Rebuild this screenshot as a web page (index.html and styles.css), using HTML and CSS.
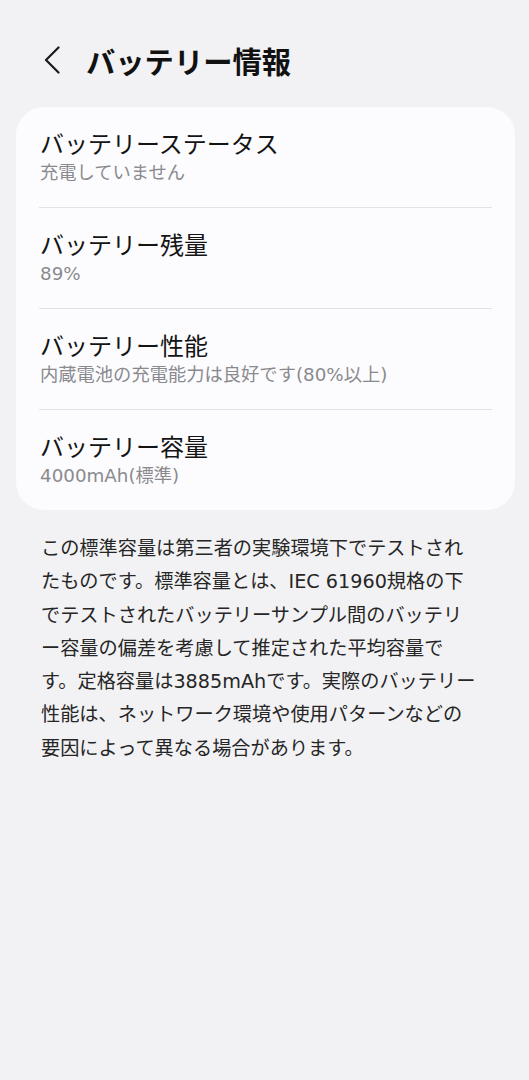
FILE: index.html
```html
<!DOCTYPE html>
<html lang="ja">
<head>
<meta charset="utf-8">
<title>バッテリー情報</title>
<link rel="stylesheet" href="styles.css">
</head>
<body>
<header class="header">
  <svg class="back" width="16" height="28" viewBox="0 0 16 28" aria-hidden="true">
    <polyline points="14.5,1.5 2,14 14.5,26.5" fill="none" stroke="#1a1a1a" stroke-width="2.2" stroke-linecap="round" stroke-linejoin="round"/>
  </svg>
  <h1 class="title">バッテリー情報</h1>
</header>
<section class="card">
  <div class="item">
    <div class="item-title">バッテリーステータス</div>
    <div class="item-sub">充電していません</div>
  </div>
  <div class="item">
    <div class="item-title">バッテリー残量</div>
    <div class="item-sub">89%</div>
  </div>
  <div class="item">
    <div class="item-title">バッテリー性能</div>
    <div class="item-sub">内蔵電池の充電能力は良好です(80%以上)</div>
  </div>
  <div class="item">
    <div class="item-title">バッテリー容量</div>
    <div class="item-sub">4000mAh(標準)</div>
  </div>
</section>
<p class="desc">この標準容量は第三者の実験環境下でテストされ<br>たものです。標準容量とは、IEC 61960規格の下<br>でテストされたバッテリーサンプル間のバッテリ<br>ー容量の偏差を考慮して推定された平均容量で<br>す。定格容量は3885mAhです。実際のバッテリー<br>性能は、ネットワーク環境や使用パターンなどの<br>要因によって異なる場合があります。</p>
</body>
</html>
```
FILE: styles.css
```css
html, body {
  margin: 0;
  padding: 0;
  background: #f2f2f4;
}
body {
  font-family: "DejaVu Sans", "Noto Sans CJK JP", sans-serif;
  color: #111;
  width: 529px;
  min-height: 1080px;
}
.header {
  display: flex;
  align-items: center;
  height: 40px;
  padding: 40px 0 0 44px;
}
.back {
  display: block;
  flex: none;
}
.title {
  margin: 0 0 0 26px;
  font-family: "Noto Sans CJK JP", sans-serif;
  font-size: 29.3px;
  font-weight: 700;
  line-height: 40px;
  color: #111;
}
.card {
  margin: 27px 14px 0 16px;
  background: #fcfcfe;
  border-radius: 28px;
  padding: 0 23px;
}
.item {
  padding: 24px 0 20px 1px;
}
.item + .item {
  border-top: 1px solid #e2e2e5;
}
.item-title {
  font-size: 24px;
  line-height: 28px;
  color: #141414;
}
.item-sub {
  font-size: 18.3px;
  line-height: 28px;
  color: #8a8a8e;
}
.desc {
  margin: 22px 20px 0 41px;
  font-size: 19.2px;
  line-height: 33.3px;
  color: #262626;
}
```
